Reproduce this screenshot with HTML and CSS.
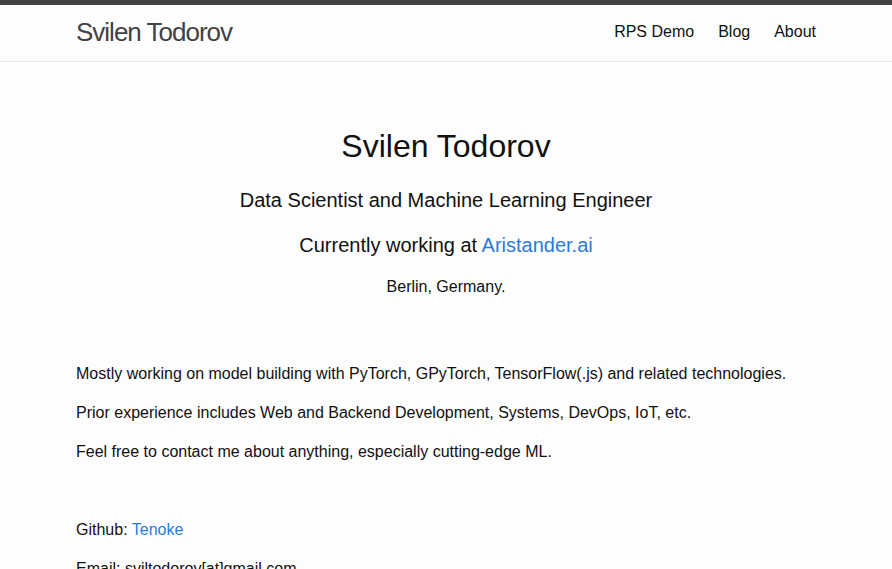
FILE: index.html
```html
<!DOCTYPE html>
<html lang="en">
<head>
<meta charset="utf-8">
<title>Svilen Todorov</title>
<link rel="stylesheet" href="styles.css">
</head>
<body>
<header class="site-header">
  <div class="wrapper header-row">
    <a class="site-title" href="#">Svilen Todorov</a>
    <nav class="site-nav">
      <a class="page-link" href="#">RPS Demo</a>
      <a class="page-link" href="#">Blog</a>
      <a class="page-link" href="#">About</a>
    </nav>
  </div>
</header>
<main class="page-content">
  <div class="wrapper">
    <div class="intro">
      <h1 class="name">Svilen Todorov</h1>
      <h3 class="role">Data Scientist and Machine Learning Engineer</h3>
      <h3 class="role">Currently working at <a href="#">Aristander.ai</a></h3>
      <p class="place">Berlin, Germany.</p>
    </div>
    <div class="about">
      <p>Mostly working on model building with PyTorch, GPyTorch, TensorFlow(.js) and related technologies.</p>
      <p>Prior experience includes Web and Backend Development, Systems, DevOps, IoT, etc.</p>
      <p>Feel free to contact me about anything, especially cutting-edge ML.</p>
    </div>
    <div class="contact">
      <p>Github: <a href="#">Tenoke</a></p>
      <p>Email: sviltodorov[at]gmail.com</p>
    </div>
  </div>
</main>
</body>
</html>
```

FILE: styles.css
```css
* { box-sizing: border-box; }
html, body { margin: 0; padding: 0; }
body {
  font-family: "Liberation Sans", Arial, Helvetica, sans-serif;
  font-size: 16px;
  line-height: 1.5;
  color: #111111;
  background: #fdfdfd;
}
a { color: #2a7ae2; text-decoration: none; }
.wrapper {
  max-width: 800px;
  margin: 0 auto;
  padding: 0 30px;
}
.site-header {
  border-top: 5px solid #424242;
  border-bottom: 1px solid #e8e8e8;
  min-height: 56px;
}
.header-row {
  display: flex;
  justify-content: space-between;
  align-items: flex-start;
  height: 56px;
}
.site-title {
  font-size: 26px;
  line-height: 54px;
  letter-spacing: -1px;
  color: #424242;
}
.site-nav {
  display: flex;
  gap: 24px;
  line-height: 54px;
}
.page-link { color: #111111; }
.page-content { padding: 30px 0; }
.intro { text-align: center; padding-top: 30px; }
.name {
  font-size: 32px;
  line-height: 48px;
  font-weight: 400;
  margin: 0 0 15px;
}
.role {
  font-size: 20px;
  line-height: 30px;
  font-weight: 400;
  margin: 0 0 15px;
}
.place { margin: 0 0 15px; }
.about { padding-top: 48px; }
p { margin: 0 0 15px; }
.contact { padding-top: 39px; }
```
